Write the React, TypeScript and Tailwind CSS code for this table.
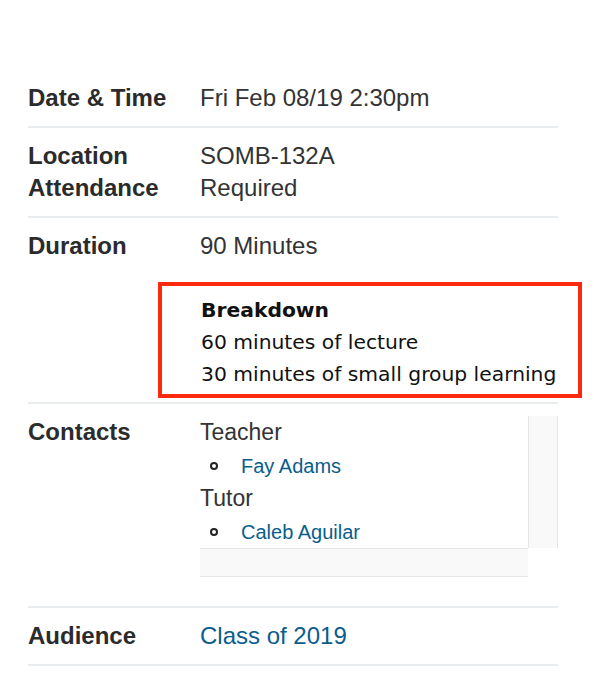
import React from "react";

const sans = { fontFamily: '"Liberation Sans", Arial, sans-serif' };

export default function App() {
  return (
    <div className="w-[594px] h-[694px] bg-white" style={sans}>
      <div className="ml-[28px] w-[530px] pt-[70px] text-[24px] leading-[32px] text-[#333333]">
        {/* Date & Time */}
        <div className="flex py-[12px] border-b-2 border-[#e8ecef]">
          <div className="w-[172px] font-bold text-[#2b2b2b]">Date &amp; Time</div>
          <div>Fri Feb 08/19 2:30pm</div>
        </div>

        {/* Location / Attendance */}
        <div className="py-[12px] border-b-2 border-[#e8ecef]">
          <div className="flex">
            <div className="w-[172px] font-bold text-[#2b2b2b]">Location</div>
            <div>SOMB-132A</div>
          </div>
          <div className="flex">
            <div className="w-[172px] font-bold text-[#2b2b2b]">Attendance</div>
            <div>Required</div>
          </div>
        </div>

        {/* Duration */}
        <div className="pt-[12px] pb-[4px] border-b-2 border-[#e8ecef]">
          <div className="flex">
            <div className="w-[172px] font-bold text-[#2b2b2b]">Duration</div>
            <div>90 Minutes</div>
          </div>
          <div className="flex mt-[20px]">
            <div className="w-[172px] shrink-0"></div>
            <div
              className="ml-[-42px] w-[424px] shrink-0 border-4 border-[#fc2a0d] pl-[39px] pt-[8px] pb-[4px] text-[20.3px] leading-[32px] text-[#111111]"
              style={{ fontFamily: '"DejaVu Sans", Verdana, sans-serif' }}
            >
              <div className="font-bold">Breakdown</div>
              <div>60 minutes of lecture</div>
              <div>30 minutes of small group learning</div>
            </div>
          </div>
        </div>

        {/* Contacts */}
        <div className="flex pt-[12px] pb-[29px] border-b-2 border-[#e8ecef]">
          <div className="w-[172px] font-bold text-[#2b2b2b]">Contacts</div>
          <div className="grid grid-cols-[328px_30px] grid-rows-[132px_29px]">
            <div className="bg-white overflow-hidden">
              <div className="text-[23px] leading-[33px]">Teacher</div>
              <div className="flex items-center h-[33px]">
                <span className="ml-[10px] w-[8px] h-[8px] rounded-full border-2 border-[#222222]"></span>
                <span className="ml-[23px] text-[20px] text-[#0a5d8c]">Fay Adams</span>
              </div>
              <div className="text-[23px] leading-[33px]">Tutor</div>
              <div className="flex items-center h-[33px]">
                <span className="ml-[10px] w-[8px] h-[8px] rounded-full border-2 border-[#222222]"></span>
                <span className="ml-[23px] text-[20px] text-[#0a5d8c]">Caleb Aguilar</span>
              </div>
            </div>
            <div className="bg-[#f9f9f9] border-l border-r border-[#e6e6e6]"></div>
            <div className="bg-[#f9f9f9] border-t border-b border-[#e6e6e6]"></div>
            <div className="bg-white"></div>
          </div>
        </div>

        {/* Audience */}
        <div className="flex py-[12px] border-b-2 border-[#e8ecef]">
          <div className="w-[172px] font-bold text-[#2b2b2b]">Audience</div>
          <div className="text-[#0a5d8c]">Class of 2019</div>
        </div>
      </div>
    </div>
  );
}
